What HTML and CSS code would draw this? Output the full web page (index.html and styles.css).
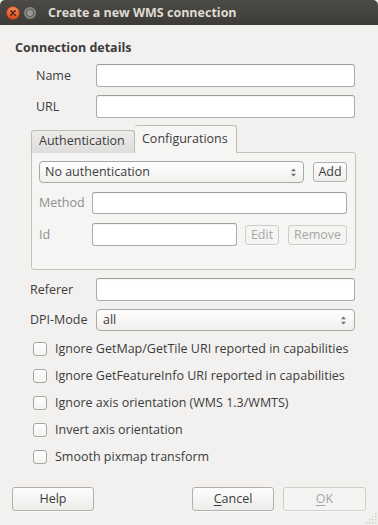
FILE: index.html
```html
<!DOCTYPE html>
<html>
<head>
<meta charset="utf-8">
<link rel="stylesheet" href="styles.css">
</head>
<body>
<div class="window">
  <div class="titlebar">
    <svg class="tb-btn" width="14" height="14" viewBox="0 0 14 14">
      <defs>
        <linearGradient id="cg" x1="0" y1="0" x2="0" y2="1">
          <stop offset="0" stop-color="#f58a5e"/>
          <stop offset="1" stop-color="#dc4a17"/>
        </linearGradient>
      </defs>
      <circle cx="7" cy="7" r="6.5" fill="url(#cg)" stroke="#9e3a12" stroke-width="0.8"/>
      <path d="M4.8 4.8 L9.2 9.2 M9.2 4.8 L4.8 9.2" stroke="#3a1a10" stroke-width="1.3" stroke-linecap="round"/>
    </svg>
    <svg class="tb-btn" width="14" height="14" viewBox="0 0 14 14">
      <circle cx="7" cy="7" r="6.5" fill="#85837e" stroke="#3f3e3a" stroke-width="0.8"/>
      <circle cx="7" cy="7" r="3.6" fill="#999792" stroke="#5c5b57" stroke-width="1"/>
    </svg>
    <span class="title">Create a new WMS connection</span>
  </div>

  <div class="content">
    <div class="group-title">Connection details</div>

    <div class="details">
      <div class="row">
        <span class="lbl w60">Name</span>
        <div class="input h23"></div>
      </div>
      <div class="row">
        <span class="lbl w60">URL</span>
        <div class="input h23"></div>
      </div>
    </div>

    <div class="tabs">
      <div class="tabbar">
        <div class="tab">Authentication</div>
        <div class="tab active">Configurations</div>
      </div>
      <div class="pane">
        <div class="row">
          <div class="combo grow">
            <span>No authentication</span>
            <svg class="spin" width="7" height="11" viewBox="0 0 7 11"><path d="M1 4.2 L3.5 1.5 L6 4.2Z M1 6.8 L3.5 9.5 L6 6.8Z" fill="#6f6f6f"/></svg>
          </div>
          <div class="btn small add">Add</div>
        </div>
        <div class="row mt9">
          <span class="lbl dis w53">Method</span>
          <div class="input h22"></div>
        </div>
        <div class="row mt9">
          <span class="lbl dis w53">Id</span>
          <div class="input h23"></div>
          <div class="btn small dis edit">Edit</div>
          <div class="btn small dis remove">Remove</div>
        </div>
      </div>
    </div>

    <div class="extra">
      <div class="row">
        <span class="lbl w66">Referer</span>
        <div class="input h23"></div>
      </div>
      <div class="row">
        <span class="lbl w66">DPI-Mode</span>
        <div class="combo grow h23 dpi">
          <span>all</span>
          <svg class="spin" width="7" height="11" viewBox="0 0 7 11"><path d="M1 4.2 L3.5 1.5 L6 4.2Z M1 6.8 L3.5 9.5 L6 6.8Z" fill="#6f6f6f"/></svg>
        </div>
      </div>
    </div>

    <div class="checks">
      <div class="check"><span class="box"></span><span>Ignore GetMap/GetTile URI reported in capabilities</span></div>
      <div class="check"><span class="box"></span><span>Ignore GetFeatureInfo URI reported in capabilities</span></div>
      <div class="check"><span class="box"></span><span>Ignore axis orientation (WMS 1.3/WMTS)</span></div>
      <div class="check"><span class="box"></span><span>Invert axis orientation</span></div>
      <div class="check"><span class="box"></span><span>Smooth pixmap transform</span></div>
    </div>

    <div class="buttons">
      <div class="btn big">Help</div>
      <div class="spacer"></div>
      <div class="btn big"><span class="u">C</span>ancel</div>
      <div class="btn big dis ok"><span class="u">O</span>K</div>
    </div>
  </div>

  <svg class="grip" width="12" height="12" viewBox="0 0 12 12">
    <g fill="#cfcdc8">
      <rect x="10" y="1" width="1.5" height="1.5"/>
      <rect x="7" y="4" width="1.5" height="1.5"/><rect x="10" y="4" width="1.5" height="1.5"/>
      <rect x="4" y="7" width="1.5" height="1.5"/><rect x="7" y="7" width="1.5" height="1.5"/><rect x="10" y="7" width="1.5" height="1.5"/>
      <rect x="1" y="10" width="1.5" height="1.5"/><rect x="4" y="10" width="1.5" height="1.5"/><rect x="7" y="10" width="1.5" height="1.5"/><rect x="10" y="10" width="1.5" height="1.5"/>
    </g>
  </svg>
</div>
</body>
</html>
```

FILE: styles.css
```css
* { box-sizing: border-box; }
html, body { margin: 0; padding: 0; }
body {
  width: 378px;
  height: 525px;
  overflow: hidden;
  background: #f2f1f0;
  font-family: "Open Sans", "Noto Sans", sans-serif;
  font-size: 12.5px;
  color: #3c3c3c;
}
.window {
  position: relative;
  width: 378px;
  height: 525px;
  background: #f2f1f0;
}
.titlebar {
  height: 25px;
  background: linear-gradient(#4c4b46, #3c3b37);
  border-radius: 5px 5px 0 0;
  display: flex;
  align-items: center;
  padding-left: 6px;
  gap: 3px;
}
.tb-btn { display: block; flex: none; }
.title {
  margin-left: 8px;
  color: #dfdbd2;
  font-weight: bold;
  font-size: 12.5px;
}
.content {
  padding-top: 15px;
}
.group-title {
  margin-left: 15px;
  font-weight: bold;
  line-height: 15px;
  height: 15px;
}
.row {
  display: flex;
  align-items: center;
}
.lbl { flex: none; line-height: 16px; }
.lbl.dis { color: #8e8e8e; }
.w60 { width: 60px; }
.w53 { width: 53px; }
.w66 { width: 66px; }
.details {
  margin: 9px 23px 0 36px;
  display: flex;
  flex-direction: column;
  gap: 8px;
}
.input {
  flex: 1;
  background: #fff;
  border: 1px solid #aeaca7;
  border-top-color: #a09e99;
  border-radius: 3px;
  box-shadow: inset 0 1px 1px rgba(0,0,0,0.05);
}
.h23 { height: 23px; }
.h22 { height: 22px; }
.mt9 { margin-top: 9px; }

.tabs {
  margin: 7px 22px 0 31px;
}
.tabbar {
  display: flex;
  align-items: flex-end;
  height: 28px;
  position: relative;
  z-index: 1;
  margin-bottom: -1px;
}
.tab {
  height: 23px;
  padding: 0 7px;
  line-height: 20px;
  border: 1px solid #bebcb7;
  border-bottom: none;
  border-radius: 3px 3px 0 0;
  background: linear-gradient(#ecebea, #dfdedc);
  width: 104px;
}
.tab.active {
  height: 28px;
  width: 102px;
  line-height: 25px;
  background: #f5f5f4;
  border-left: none;
}
.pane {
  height: 118px;
  border: 1px solid #c3c1bc;
  border-radius: 0 3px 3px 3px;
  background: #f5f5f4;
  padding: 8px 8px 0 7px;
}
.combo {
  height: 22px;
  border: 1px solid #aaa8a3;
  border-radius: 4px;
  background: linear-gradient(#fefefe, #f1f0ef);
  display: flex;
  align-items: center;
  padding: 0 5px 0 5px;
  line-height: 16px;
}
.combo span { flex: 1; }
.combo .spin { flex: none; margin-right: 1px; }
.dpi { padding-left: 6px; }
.dpi .spin { margin-right: 2px; }
.grow { flex: 1; }

.btn {
  flex: none;
  border: 1px solid #b3b0ab;
  border-radius: 3px;
  background: linear-gradient(#fcfcfc, #eeedec);
  text-align: center;
  box-shadow: 0 1px 0 rgba(255,255,255,0.6);
}
.btn.small { height: 20px; line-height: 17px; }
.btn.dis {
  color: #a6a6a6;
  border-color: #cfcdc9;
  background: #f4f4f3;
}
.add { width: 34px; margin-left: 9px; }
.edit { width: 34px; margin-left: 8px; }
.remove { width: 59px; margin-left: 9px; }

.extra {
  margin: 8px 22px 0 30px;
  display: flex;
  flex-direction: column;
  gap: 8px;
}
.extra .input { margin-right: 1px; }
.extra .combo { margin-right: 1px; }

.checks {
  margin: 4px 0 0 33px;
}
.check {
  height: 27px;
  display: flex;
  align-items: center;
}
.box {
  flex: none;
  width: 14px;
  height: 14px;
  border: 1px solid #a8a6a1;
  border-radius: 3px;
  background: linear-gradient(#ffffff, #f3f3f2);
  margin-right: 8px;
}

.buttons {
  margin: 17px 12px 0 12px;
  display: flex;
}
.spacer { flex: 1; }
.btn.big {
  width: 82px;
  height: 24px;
  line-height: 21px;
}
.btn.big.ok { width: 83px; margin-left: 9px; }
.u { text-decoration: underline; text-underline-offset: 2px; }
.grip {
  position: absolute;
  right: 1px;
  bottom: 1px;
}
```
